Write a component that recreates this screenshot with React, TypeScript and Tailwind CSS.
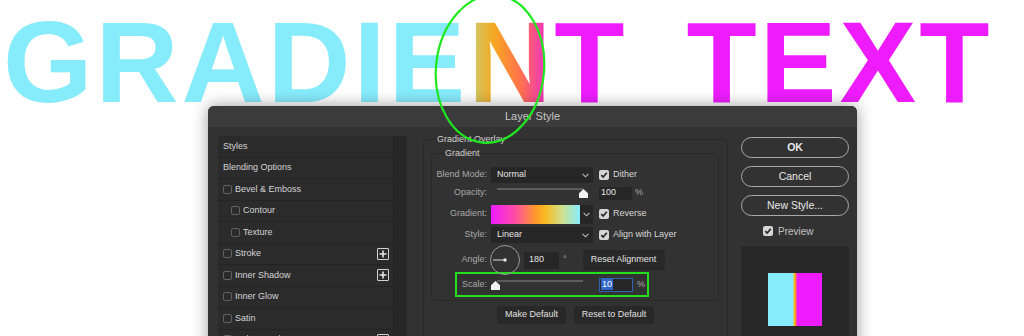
import React from "react";

const Check = ({ checked }: { checked?: boolean }) =>
  checked ? (
    <span className="w-[10px] h-[10px] rounded-[2px] bg-[#d6d6d6] flex items-center justify-center shrink-0">
      <svg width="8" height="8" viewBox="0 0 8 8">
        <path d="M1.2 4.1 L3.2 6.1 L6.8 1.7" stroke="#2a2a2a" strokeWidth="1.7" fill="none" />
      </svg>
    </span>
  ) : (
    <span className="w-[9px] h-[9px] rounded-[2px] border border-[#626262] shrink-0" />
  );

const Plus = () => (
  <span className="ml-auto w-[12px] h-[12px] border border-[#d2d2d2] rounded-[1px] flex items-center justify-center">
    <svg width="8" height="8" viewBox="0 0 8 8">
      <path d="M4 0.5 V7.5 M0.5 4 H7.5" stroke="#e6e6e6" strokeWidth="1.6" />
    </svg>
  </span>
);

const Chevron = () => (
  <svg width="7" height="5" viewBox="0 0 7 5">
    <path d="M0.6 0.8 L3.5 3.8 L6.4 0.8" stroke="#bdbdbd" strokeWidth="1.1" fill="none" />
  </svg>
);

const Thumb = () => (
  <svg width="9" height="9" viewBox="0 0 9 9">
    <polygon points="4.5,0 9,4.2 9,9 0,9 0,4.2" fill="#f2f2f2" />
  </svg>
);

type Row = { label: string; box?: boolean; indent?: boolean; plus?: boolean };
const rows: Row[] = [
  { label: "Styles" },
  { label: "Blending Options" },
  { label: "Bevel & Emboss", box: true },
  { label: "Contour", box: true, indent: true },
  { label: "Texture", box: true, indent: true },
  { label: "Stroke", box: true, plus: true },
  { label: "Inner Shadow", box: true, plus: true },
  { label: "Inner Glow", box: true },
  { label: "Satin", box: true },
  { label: "Color Overlay", box: true, plus: true },
];

const Label = ({ children, w = "w-[55px]" }: { children: React.ReactNode; w?: string }) => (
  <span className={`${w} text-right text-[#a8a8a8] shrink-0`}>{children}</span>
);

export default function App() {
  return (
    <div className="relative w-[1024px] h-[336px] overflow-hidden bg-white font-['Liberation_Sans',Arial,sans-serif]">
      {/* Big heading */}
      <div className="h-[106px] pl-[3px] pt-[18px] flex whitespace-nowrap text-[115px] leading-[88px] font-bold tracking-[3px]">
        <span className="text-[#86ebfb]">GRADIE</span>
        <span className="bg-[linear-gradient(90deg,#c4d27e_0%,#f6a81f_30%,#ff7050_62%,#e81fe6_100%)] bg-clip-text text-transparent">
          N
        </span>
        <span className="text-[#ee1cfd]">T</span>
        <span className="ml-[59px] text-[#ee1cfd]">TEXT</span>
      </div>

      {/* Dialog */}
      <div className="relative ml-[208px] w-[649px] h-[250px] rounded-t-[6px] bg-[#323232] shadow-[0_0_16px_rgba(0,0,0,0.4)] overflow-hidden text-[9px]">
        <div className="h-[21px] bg-[#3b3b3b] flex items-center justify-center text-[11px] text-[#c6c6c6]">
          Layer Style
        </div>
        <div className="flex">
          {/* Left list */}
          <div className="flex pl-[10px] pt-[9px] w-[199px] shrink-0">
            <div className="w-[175px] bg-[#2b2b2b]">
              {rows.map((r) => (
                <div
                  key={r.label}
                  className={`h-[21.5px] border-b border-[#242424] flex items-center gap-[3px] pr-[4px] text-[#d4d4d4] ${
                    r.indent ? "pl-[13px]" : "pl-[5px]"
                  }`}
                >
                  {r.box && <Check />}
                  <span>{r.label}</span>
                  {r.plus && <Plus />}
                </div>
              ))}
            </div>
            <div className="w-[14px] bg-[#272727]" />
          </div>

          {/* Middle */}
          <div className="w-[326px] pl-[16px] pt-[7px] shrink-0">
            <fieldset className="w-[305px] h-[230px] border border-[#292929] rounded-[3px]">
              <legend className="ml-[13px] leading-[11px] text-[#d0d0d0]">Gradient Overlay</legend>
              <fieldset className="ml-[7px] mt-[3px] w-[288px] border border-[#292929] rounded-[3px] pb-[3px]">
                <legend className="ml-[13px] leading-[11px] text-[#d0d0d0]">Gradient</legend>

                {/* Blend mode */}
                <div className="mt-[7px] h-[18px] flex items-center">
                  <Label>Blend Mode:</Label>
                  <div className="ml-[4px] w-[102px] h-[16px] bg-[#262626] flex items-center justify-between pl-[6px] pr-[4px] text-[#e4e4e4]">
                    <span>Normal</span>
                    <Chevron />
                  </div>
                  <span className="ml-[6px]"><Check checked /></span>
                  <span className="ml-[4px] text-[#d8d8d8]">Dither</span>
                </div>

                {/* Opacity */}
                <div className="h-[18px] flex items-center">
                  <Label>Opacity:</Label>
                  <div className="ml-[4px] w-[96px] h-[12px] relative">
                    <div className="absolute top-[1px] left-[6px] right-[4px] h-[2px] bg-[#5c5c5c]" />
                    <div className="absolute top-[2px] right-[-1px] flex">
                      <Thumb />
                    </div>
                  </div>
                  <div className="ml-[12px] w-[33px] h-[13px] bg-[#262626] flex items-center pl-[2px] text-[#e4e4e4]">
                    100
                  </div>
                  <span className="ml-[3px] text-[#a8a8a8]">%</span>
                </div>

                {/* Gradient */}
                <div className="h-[24px] flex items-center">
                  <Label>Gradient:</Label>
                  <div className="ml-[4px] w-[102px] h-[19px] bg-[#262626] flex items-center">
                    <div className="w-[89px] h-[19px] bg-[linear-gradient(90deg,#ee1bff_0%,#ff4fa0_28%,#ff9a2a_50%,#f7bd25_62%,#cfe08e_80%,#86ecfc_100%)]" />
                    <span className="flex-1 flex justify-center">
                      <Chevron />
                    </span>
                  </div>
                  <span className="ml-[6px]"><Check checked /></span>
                  <span className="ml-[4px] text-[#d8d8d8]">Reverse</span>
                </div>

                {/* Style */}
                <div className="h-[18px] flex items-center">
                  <Label>Style:</Label>
                  <div className="ml-[4px] w-[102px] h-[16px] bg-[#262626] flex items-center justify-between pl-[6px] pr-[4px] text-[#e4e4e4]">
                    <span>Linear</span>
                    <Chevron />
                  </div>
                  <span className="ml-[6px]"><Check checked /></span>
                  <span className="ml-[4px] text-[#d8d8d8]">Align with Layer</span>
                </div>

                {/* Angle */}
                <div className="h-[28px] pt-[4px] flex items-center">
                  <Label>Angle:</Label>
                  <div className="ml-[3px] w-[30px] h-[30px] shrink-0">
                    <svg width="30" height="30" viewBox="0 0 30 30">
                      <circle cx="15" cy="15" r="14.5" stroke="#9a9a9a" strokeWidth="1" fill="none" />
                      <line x1="3" y1="15" x2="15" y2="15" stroke="#dcdcdc" strokeWidth="1" />
                      <circle cx="15" cy="15" r="1.7" fill="#e6e6e6" />
                    </svg>
                  </div>
                  <div className="ml-[4px] w-[35px] h-[17px] bg-[#262626] flex items-center pl-[5px] text-[#e4e4e4]">
                    180
                  </div>
                  <span className="ml-[4px] text-[#a8a8a8]">°</span>
                  <div className="ml-[16px] w-[82px] h-[20px] rounded-[3px] bg-[#282828] flex items-center justify-center text-[#e0e0e0]">
                    Reset Alignment
                  </div>
                </div>

                {/* Scale */}
                <div className="ml-[23px] w-[194px] h-[25px] border-2 border-[#22e01c] flex items-center">
                  <Label w="w-[30px]">Scale:</Label>
                  <div className="ml-[4px] w-[96px] h-[12px] relative">
                    <div className="absolute top-[1px] left-[6px] right-[4px] h-[2px] bg-[#5c5c5c]" />
                    <div className="absolute top-[2px] left-0 flex">
                      <Thumb />
                    </div>
                  </div>
                  <div className="ml-[12px] w-[34px] h-[14px] border border-[#3361ad] bg-[#262626] flex items-center pl-[1px]">
                    <span className="bg-[#3066c8] text-white leading-[11px] px-[1px]">10</span>
                  </div>
                  <span className="ml-[4px] text-[#a8a8a8]">%</span>
                </div>
              </fieldset>

              <div className="mt-[5px] flex justify-center gap-[8px] text-[#e0e0e0]">
                <div className="w-[69px] h-[18px] rounded-[3px] bg-[#282828] flex items-center justify-center">
                  Make Default
                </div>
                <div className="w-[80px] h-[18px] rounded-[3px] bg-[#282828] flex items-center justify-center">
                  Reset to Default
                </div>
              </div>
            </fieldset>
          </div>

          {/* Right */}
          <div className="w-[124px] px-[8px] pt-[10px] flex flex-col shrink-0">
            <div className="h-[21px] rounded-full border border-[#a9a9a9] flex items-center justify-center text-[10.5px] font-bold text-[#e8e8e8]">
              OK
            </div>
            <div className="mt-[8px] h-[21px] rounded-full border border-[#a9a9a9] flex items-center justify-center text-[10.5px] text-[#e8e8e8]">
              Cancel
            </div>
            <div className="mt-[8px] h-[21px] rounded-full border border-[#a9a9a9] flex items-center justify-center text-[10.5px] text-[#e8e8e8]">
              New Style...
            </div>
            <div className="mt-[6px] h-[18px] flex items-center pl-[22px]">
              <Check checked />
              <span className="ml-[5px] text-[10px] text-[#c2c2c2]">Preview</span>
            </div>
            <div className="mt-[6px] h-[120px] bg-[#282828] flex justify-center pt-[27px]">
              <div className="w-[54px] h-[53px] bg-[linear-gradient(90deg,#86ecfc_0%,#86ecfc_46%,#e9c83a_48%,#ff9624_51%,#ee1bff_54%,#ee1bff_100%)]" />
            </div>
          </div>
        </div>
      </div>

      {/* Annotation ellipse */}
      <svg className="absolute left-0 top-0 pointer-events-none" width="1024" height="336">
        <ellipse cx="490" cy="69" rx="54" ry="74" transform="rotate(6 490 69)" fill="none" stroke="#1ee81e" strokeWidth="2.2" />
      </svg>
    </div>
  );
}
